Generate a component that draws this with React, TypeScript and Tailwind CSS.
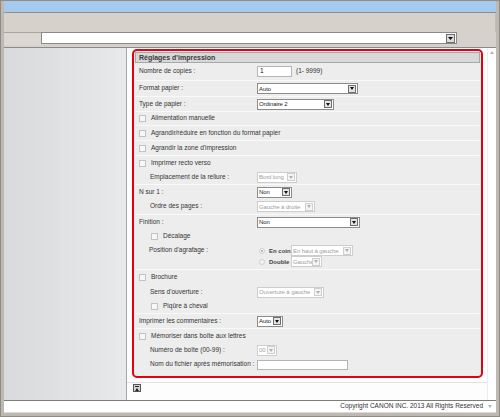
import React from "react";

const font = { fontFamily: '"Liberation Sans", Arial, sans-serif' };

function Arrow({ disabled }: { disabled?: boolean }) {
  return (
    <span
      className={
        "flex items-center justify-center w-[8px] h-[8px] mr-[1px] border shrink-0 " +
        (disabled ? "border-[#cfcfcf] bg-[#f4f4f4]" : "border-[#6e6e6e] bg-[#e4e4e4]")
      }
    >
      <svg width="4" height="3" viewBox="0 0 4 3">
        <path d="M0 0 L4 0 L2 3 Z" fill={disabled ? "#b0b0b0" : "#111"} />
      </svg>
    </span>
  );
}

function Select({ w, value, disabled }: { w: string; value: string; disabled?: boolean }) {
  return (
    <div
      className={
        "flex items-center h-[11px] bg-white border shrink-0 " +
        w +
        " " +
        (disabled ? "border-[#cdcdcd] text-[#a0a0a0]" : "border-[#8c8c8c] text-[#222]")
      }
    >
      <span className="flex-1 pl-[1px] whitespace-nowrap overflow-hidden leading-none text-[6px] tracking-[-0.1px]">
        {value}
      </span>
      <Arrow disabled={disabled} />
    </div>
  );
}

function Checkbox() {
  return <span className="inline-block w-[7px] h-[7px] border border-[#c2c2c2] bg-[#f7f7f7] shrink-0" />;
}

function Radio({ checked }: { checked?: boolean }) {
  return (
    <span className="flex items-center justify-center w-[6px] h-[6px] rounded-full border border-[#cfcfcf] bg-[#f6f6f6] shrink-0">
      {checked && <span className="w-[2px] h-[2px] rounded-full bg-[#aaaaaa]" />}
    </span>
  );
}

function Row({ h, sep, children }: { h: string; sep?: boolean; children: React.ReactNode }) {
  return (
    <div className={"flex items-center " + h + (sep ? " border-t border-[#f9f9f9]" : "")}>{children}</div>
  );
}

function Label({ indent, children }: { indent?: boolean; children: React.ReactNode }) {
  return (
    <div className={"w-[122px] shrink-0 whitespace-nowrap " + (indent ? "pl-[15px]" : "pl-[4px]")}>
      {children}
    </div>
  );
}

function CheckRow({ indent, text }: { indent?: boolean; text: string }) {
  return (
    <div className={"flex items-center gap-[5px] whitespace-nowrap " + (indent ? "pl-[16px]" : "pl-[4px]")}>
      <Checkbox />
      <span>{text}</span>
    </div>
  );
}

export default function App() {
  return (
    <div
      className="w-[500px] h-[417px] bg-[#8f8b85] p-[1px] overflow-hidden text-[6.5px] leading-none text-[#333]"
      style={font}
    >
      <div className="w-full h-full bg-[#bdb9b2] px-[3px] pb-[3px] flex flex-col">
        {/* title bar */}
        <div className="h-[12px] bg-[#a6c9ee] border-b border-[#8e8e8e] shrink-0" />
        {/* toolbar */}
        <div className="h-[19px] bg-[#d6d2cb] shrink-0 border-r border-[#c2beb7]" />
        <div className="h-[15px] bg-[#d6d2cb] flex shrink-0">
          <div className="w-[37px] h-[13px] bg-[#dcd8d1] border-t border-[#a9a59e]" />
          <div className="w-[416px] h-[12px] bg-white border border-[#8a8a8a] flex items-center justify-end">
            <span className="flex items-center justify-center w-[9px] h-[9px] mr-[1px] border border-[#6e6e6e] bg-[#dcdcdc]">
              <svg width="5" height="3" viewBox="0 0 5 3">
                <path d="M0 0 L5 0 L2.5 3 Z" fill="#111" />
              </svg>
            </span>
          </div>
          <div className="flex-1" />
        </div>
        <div className="h-[1px] bg-[#8a8a8a] shrink-0" />
        {/* main */}
        <div className="h-[352px] flex shrink-0">
          <div className="w-[123px] bg-gradient-to-r from-[#d9dadc] to-[#e8e9ea] border-r border-[#a6a6a6]" />
          <div className="w-[360px] bg-[#fdfdfd] pl-[5px] pt-[1px] flex flex-col">
            {/* panel */}
            <div className="w-[351px] h-[329px] border-2 border-[#e5000f] rounded-[5px] bg-[#ededed] p-[1px] flex flex-col">
              <div className="h-[11px] bg-[#d8d8d8] border border-[#a8a8a8] flex items-center pl-[3px] font-bold text-[#3a3a3a] text-[7px]">
                Réglages d'impression
              </div>
              <Row h="h-[17px]">
                <Label>Nombre de copies :</Label>
                <div className="w-[35px] h-[11px] bg-white border border-[#b4b4b4] flex items-center pl-[2px] text-[#111]">
                  1
                </div>
                <span className="ml-[4px]">(1- 9999)</span>
              </Row>
              <Row h="h-[16px]" sep>
                <Label>Format papier :</Label>
                <Select w="w-[101px]" value="Auto" />
              </Row>
              <Row h="h-[15px]" sep>
                <Label>Type de papier :</Label>
                <Select w="w-[77px]" value="Ordinaire 2" />
              </Row>
              <Row h="h-[14px]" sep>
                <CheckRow text="Alimentation manuelle" />
              </Row>
              <Row h="h-[15px]" sep>
                <CheckRow text="Agrandir/réduire en fonction du format papier" />
              </Row>
              <Row h="h-[15px]" sep>
                <CheckRow text="Agrandir la zone d'impression" />
              </Row>
              <Row h="h-[15px]" sep>
                <CheckRow text="Imprimer recto verso" />
              </Row>
              <Row h="h-[14px]">
                <Label indent>Emplacement de la reliure :</Label>
                <Select w="w-[40px]" value="Bord long" disabled />
              </Row>
              <Row h="h-[15px]" sep>
                <Label>N sur 1 :</Label>
                <Select w="w-[35px]" value="Non" />
              </Row>
              <Row h="h-[15px]">
                <Label indent>Ordre des pages :</Label>
                <Select w="w-[58px]" value="Gauche à droite" disabled />
              </Row>
              <Row h="h-[15px]" sep>
                <Label>Finition :</Label>
                <Select w="w-[103px]" value="Non" />
              </Row>
              <Row h="h-[15px]">
                <CheckRow indent text="Décalage" />
              </Row>
              <div className="h-[25px] flex pt-[1px]">
                <div className="w-[122px] shrink-0 pl-[14px] h-[11px] flex items-center whitespace-nowrap">
                  Position d'agrafage :
                </div>
                <div className="flex flex-col">
                  <div className="h-[11px] flex items-center pl-[2px]">
                    <Radio checked />
                    <span className="w-[26px] pl-[4px] font-bold text-[6px] text-[#444] whitespace-nowrap">En coin</span>
                    <Select w="w-[62px]" value="En haut à gauche" disabled />
                  </div>
                  <div className="h-[11px] flex items-center pl-[2px]">
                    <Radio />
                    <span className="w-[26px] pl-[4px] font-bold text-[6px] text-[#444] whitespace-nowrap">Double</span>
                    <Select w="w-[31px]" value="Gauche" disabled />
                  </div>
                </div>
              </div>
              <Row h="h-[16px]" sep>
                <CheckRow text="Brochure" />
              </Row>
              <Row h="h-[14px]">
                <Label indent>Sens d'ouverture :</Label>
                <Select w="w-[67px]" value="Ouverture à gauche" disabled />
              </Row>
              <Row h="h-[14px]">
                <CheckRow indent text="Piqûre à cheval" />
              </Row>
              <Row h="h-[15px]" sep>
                <Label>Imprimer les commentaires :</Label>
                <Select w="w-[26px]" value="Auto" />
              </Row>
              <Row h="h-[15px]" sep>
                <CheckRow text="Mémoriser dans boîte aux lettres" />
              </Row>
              <Row h="h-[14px]">
                <Label indent>Numéro de boîte (00-99) :</Label>
                <Select w="w-[20px]" value="00" disabled />
              </Row>
              <Row h="h-[15px]">
                <Label indent>Nom du fichier après mémorisation :</Label>
                <div className="w-[91px] h-[10px] bg-white border border-[#b4b4b4]" />
              </Row>
            </div>
            <div className="mt-[4px] mr-[-5px] ml-[-5px] h-[1px] bg-[#e2e2e2]" />
            <div className="mt-[1px] ml-[1px] w-[8px] h-[8px] border border-[#555] bg-[#d6d6d6] flex flex-col items-center justify-center gap-[1px]">
              <span className="w-[4px] h-[1px] bg-[#222]" />
              <svg width="4" height="3" viewBox="0 0 4 3">
                <path d="M0 3 L4 3 L2 0 Z" fill="#222" />
              </svg>
            </div>
          </div>
          <div className="flex-1 bg-white border-l border-[#eeeeee] flex justify-center pt-[3px]">
            <svg width="4" height="3" viewBox="0 0 4 3">
              <path d="M0 3 L4 3 L2 0 Z" fill="#b5b5b5" />
            </svg>
          </div>
        </div>
        <div className="h-[1px] bg-[#7c7c7c] shrink-0" />
        <div className="h-[11px] bg-white flex items-center justify-end shrink-0">
          <span className="text-[#333] whitespace-nowrap">Copyright CANON INC. 2013 All Rights Reserved</span>
          <span className="w-[13px] flex justify-center">
            <svg width="4" height="3" viewBox="0 0 4 3">
              <path d="M0 0 L4 0 L2 3 Z" fill="#b5b5b5" />
            </svg>
          </span>
        </div>
        <div className="flex-1 bg-[#dedbd6]" />
      </div>
    </div>
  );
}
